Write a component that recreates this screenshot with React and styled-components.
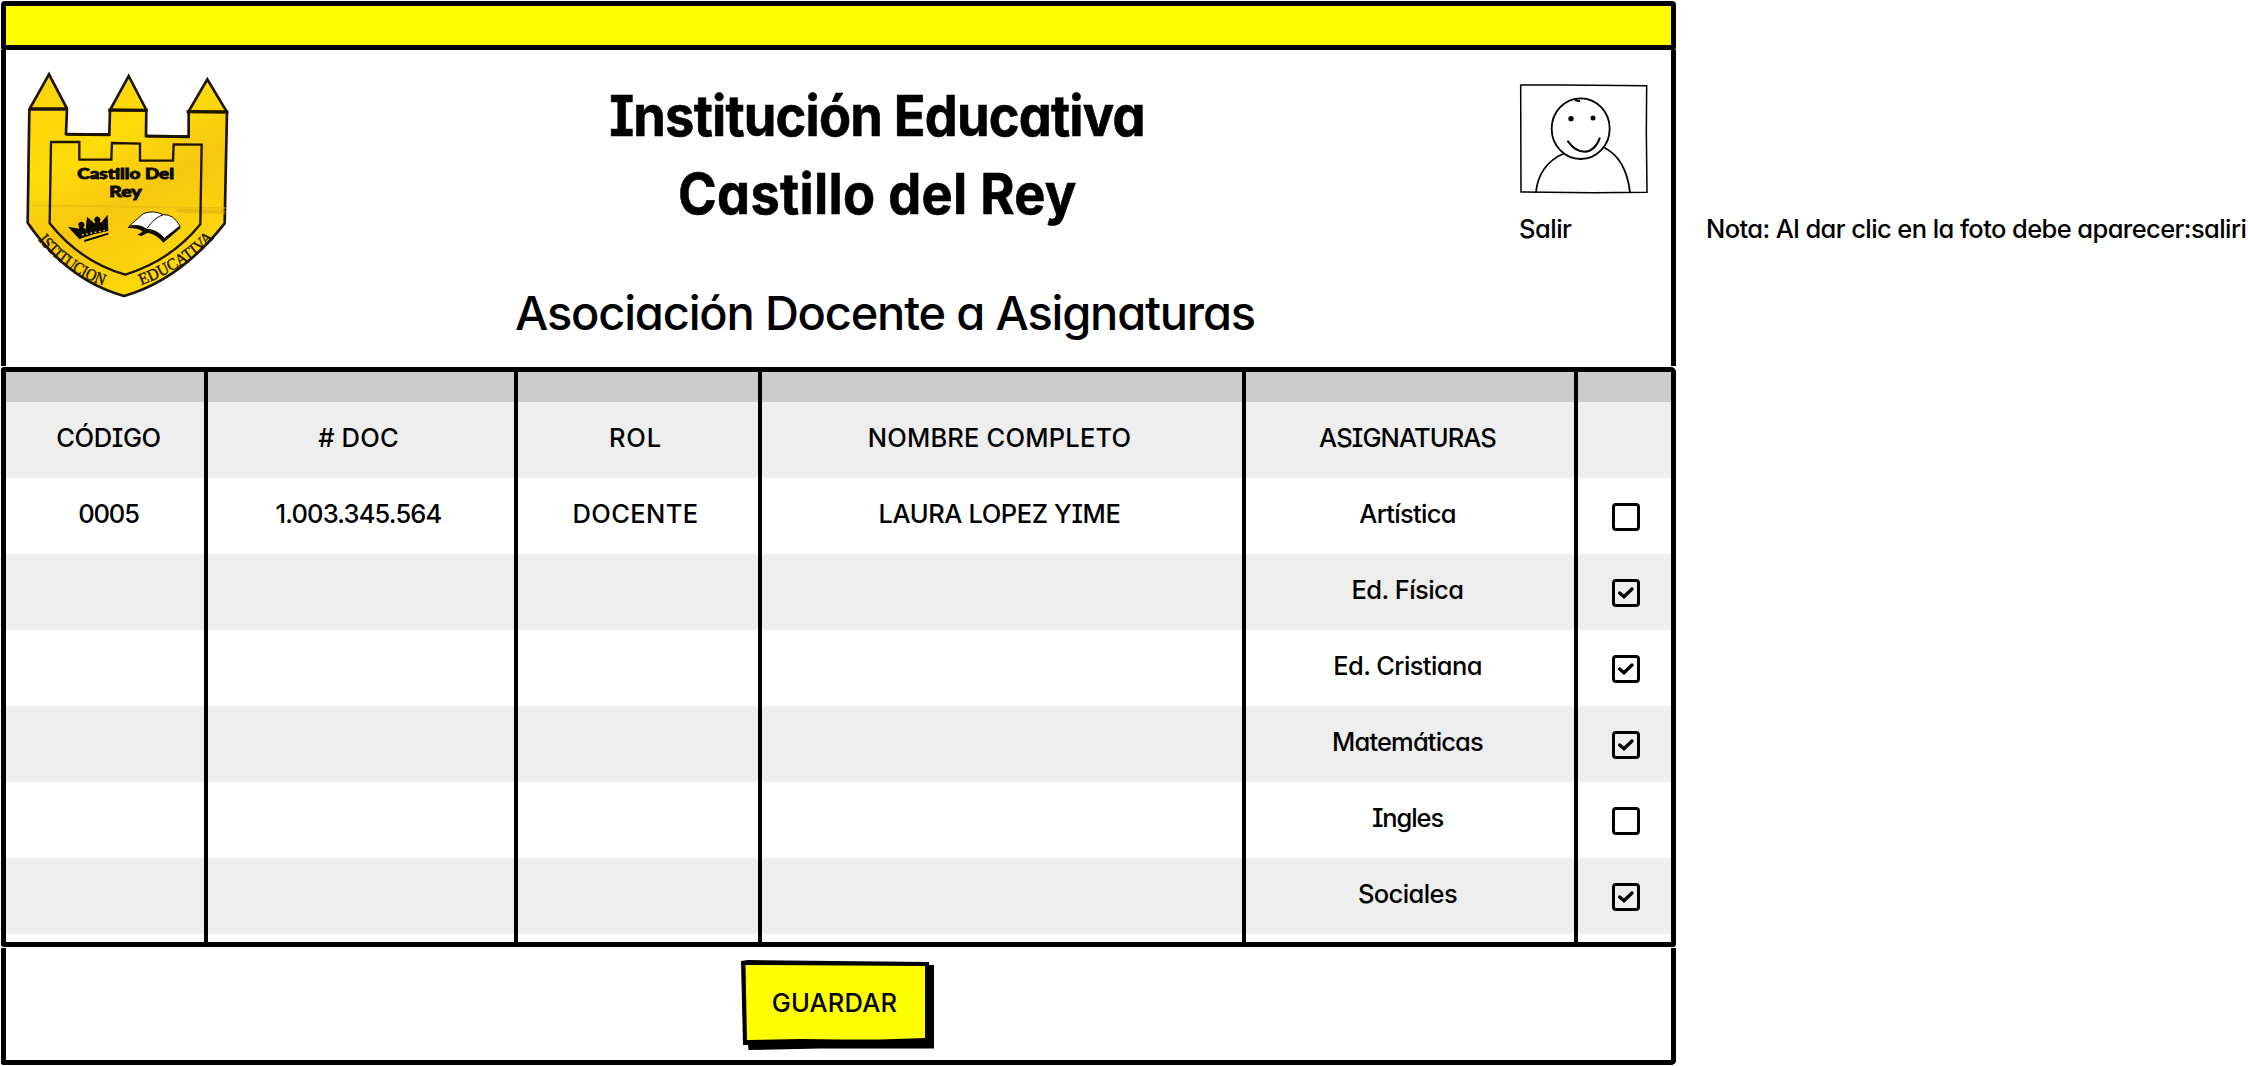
import React, { useState } from 'react';
import styled, { createGlobalStyle } from 'styled-components';

const GlobalStyle = createGlobalStyle`
  * { box-sizing: border-box; }
  body {
    margin: 0;
    background: #fff;
    color: #000;
    font-family: Inter, "Noto Sans", sans-serif;
    font-feature-settings: "cv11", "cv08";
    overflow: hidden;
  }
`;

const Page = styled.main`
  display: flex;
  align-items: flex-start;
  width: 2248px;
  height: 1066px;
  overflow: hidden;
`;

const Screen = styled.section`
  display: flex;
  flex-direction: column;
  flex: none;
  width: 1676px;
  padding: 1px 0 0 1px;
`;

const TopBar = styled.div`
  height: 49px;
  border: 5px solid #000;
  border-radius: 4px 4px 2px 2px;
  background: #ffff00;
`;

const Header = styled.header`
  display: grid;
  grid-template-columns: 234px 1fr 152px;
  height: 316px;
  margin-bottom: 1px;
  border: solid #000;
  border-width: 0 5px;
`;

const LogoSlot = styled.div`
  padding: 20px 0 0 14px;
`;

const Titles = styled.div`
  display: flex;
  flex-direction: column;
  align-items: center;
  padding: 27px 5px 0 0;
`;

const Title = styled.h1`
  margin: 0;
  font-size: 56.4px;
  font-weight: 700;
  line-height: 78px;
  letter-spacing: ${(p) => p.$track}px;
  white-space: nowrap;
  transform: scaleX(0.93);
  -webkit-text-stroke: 0.6px #000;
`;

const Subtitle = styled.h2`
  margin: 50px 0 0 16px;
  font-size: 47px;
  font-weight: 500;
  line-height: 60px;
  letter-spacing: -1.2px;
  white-space: nowrap;
`;

const Label = styled.span`
  font-size: 25.5px;
  font-weight: 500;
  line-height: 30px;
  letter-spacing: ${(p) => p.$track || 0}px;
  white-space: nowrap;
`;

const User = styled.div`
  display: flex;
  flex-direction: column;
  align-items: flex-start;
  gap: 19px;
  padding-top: 33px;
`;

const Table = styled.div`
  display: flex;
  flex-direction: column;
  height: 580px;
  margin-bottom: 1px;
  border: 5px solid #000;
  border-radius: 3px 5px 3px 3px;
`;

const Row = styled.div`
  display: grid;
  grid-template-columns: 202px 310px 244px 484px 332px 93px;
  height: ${(p) => p.$height || 76}px;
  background: ${(p) => p.$fill || '#fff'};
`;

const Cell = styled.div`
  display: flex;
  align-items: center;
  justify-content: center;
  padding: 0 ${(p) => (p.$first ? 0 : 5)}px 5px ${(p) => (p.$first ? 7 : 0)}px;
  border-right: 4px solid #000;
`;

const CheckCell = styled.div`
  display: flex;
  align-items: center;
  justify-content: center;
  padding: 2px 0 0 3px;
`;

const CheckButton = styled.button`
  display: block;
  width: 28px;
  height: 28px;
  padding: 0;
  border: 3px solid #000;
  border-radius: 4px;
  background: transparent;
`;

const Footer = styled.footer`
  display: flex;
  align-items: flex-start;
  height: 117px;
  padding: 12px 0 0 735px;
  border: solid #000;
  border-width: 0 5px 5px;
  border-radius: 0 0 5px 3px;
`;

const SaveButton = styled.button`
  position: relative;
  z-index: 0;
  width: 193px;
  height: 90px;
  padding: 0 6px 5px 0;
  border: 0;
  background: none;
  color: #000;
  font-family: inherit;
  font-feature-settings: inherit;

  &::before,
  &::after {
    content: '';
    position: absolute;
    inset: 0;
    z-index: -1;
  }
  &::before {
    background: #000;
    clip-path: polygon(0 1px, 7px 0, 188px 2px, 188px 5px, 193px 5px, 193px 88.5px, 80px 88.5px, 7.5px 90px, 7px 85px, 2px 85px);
  }
  &::after {
    background: #ffff00;
    clip-path: polygon(4.5px 5px, 184px 6px, 184px 78px, 140px 79.5px, 100px 79.5px, 60px 79px, 6px 80px);
  }
`;

const Note = styled.aside`
  padding: 214px 0 0 30px;
`;

function Logo() {
  return (
    <svg width="213.33" height="230" viewBox="60 60 640 690" role="img">
      <defs>
        <path id="ribbonLeft" d="M114 570 Q195 668 314 708" />
        <path id="ribbonRight" d="M424 706 Q562 652 648 558" />
        <linearGradient id="gold" x1="0" y1="0" x2="0.5" y2="1">
          <stop offset="0" stopColor="#fdd20c" />
          <stop offset="0.4" stopColor="#ffdc0a" />
          <stop offset="0.65" stopColor="#f6c710" />
          <stop offset="1" stopColor="#ffd80a" />
        </linearGradient>
      </defs>
      <path
        d="M88 178 L147 73 L201 176 L198 252 L328 254 L330 180 L386 78 L439 180 L438 258 L566 260 L566 184 L622 88 L681 186 L674 520 Q540 690 372 738 Q200 690 83 518 Z"
        fill="url(#gold)"
        stroke="#1c1404"
        strokeWidth="8"
      />
      <path d="M88 177 L204 177 M325 180 L443 181 M560 185 L685 186" stroke="#1c1404" strokeWidth="10" />
      <path d="M198 253 L328 254 M438 258 L568 260" stroke="#1c1404" strokeWidth="9" />
      <path d="M95 466 L675 474" stroke="#e9c010" strokeWidth="5" />
      <path d="M530 482 L675 486" stroke="#d9a512" strokeWidth="12" opacity="0.5" />
      <path
        d="M153 276 L238 276 L238 329 L334 329 L336 279 L420 281 L420 332 L519 332 L521 283 L605 284 L601 523 Q515 630 376 674 Q240 635 149 520 Z"
        fill="none"
        stroke="#1c1404"
        strokeWidth="7"
      />
      <g fontFamily="Lato, sans-serif" fontWeight="900" fontSize="43" fill="#0c0900" stroke="#0c0900" strokeWidth="2.5">
        <text x="232" y="388" textLength="290" lengthAdjust="spacingAndGlyphs">Castillo Del</text>
        <text x="328" y="441" textLength="97" lengthAdjust="spacingAndGlyphs">Rey</text>
      </g>
      <path d="M204 530 L238 536 L236 528 A9 9 0 1 1 249 532 L257 538 L261 500 L283 520 L286 516 A9 9 0 1 1 299 515 L303 518 L323 494 L325 543 Q282 550 238 568 Z" fill="#0c0900" />
      <path d="M253 573 L325 551" stroke="#0c0900" strokeWidth="6" />
      <path d="M246 555 L320 540" stroke="#f8d43a" strokeWidth="4" strokeDasharray="5 8" />
      <path d="M384 530 L424 525 Q442 535 452 541 Q480 545 491 565 L541 526 L541 535 L490 578 Q472 554 444 548 L424 558 L412 554 L428 545 Q415 533 384 534 Z" fill="#0c0900" />
      <path d="M388 528 L430 491 Q460 479 490 494 Q520 492 540 528 L493 565 Q470 538 440 538 Q420 522 388 528 Z" fill="#fff" stroke="#0c0900" strokeWidth="3" />
      <path d="M490 494 Q462 503 441 536" fill="none" stroke="#0c0900" strokeWidth="3" />
      <g fontFamily="Liberation Serif, serif" fontSize="50" fill="#1c1404" stroke="#1c1404" strokeWidth="1.2">
        <text textLength="242" lengthAdjust="spacingAndGlyphs">
          <textPath href="#ribbonLeft" textLength="242" lengthAdjust="spacingAndGlyphs">ISTITUCION</textPath>
        </text>
        <text textLength="262" lengthAdjust="spacingAndGlyphs">
          <textPath href="#ribbonRight" textLength="262" lengthAdjust="spacingAndGlyphs">EDUCATIVA</textPath>
        </text>
      </g>
    </svg>
  );
}

function Avatar() {
  return (
    <svg width="130" height="112" viewBox="27 24 390 336" fill="none" stroke="#000" strokeLinecap="round">
      <path d="M32 30 L160 30 L410 32 L409 170 L411 352 L250 353 L33 351 Z" strokeWidth="4.5" />
      <ellipse cx="212" cy="161" rx="87" ry="91" strokeWidth="5.5" />
      <path d="M197 76 L208 78" strokeWidth="6" />
      <path d="M174 199 C190 222 208 230 224 230 C246 229 260 214 269 190" strokeWidth="6" />
      <path d="M78 352 C82 300 112 256 160 236" strokeWidth="5" />
      <path d="M285 219 C334 245 354 300 360 352" strokeWidth="5.5" />
      <g fill="#000" stroke="none">
        <circle cx="183" cy="131" r="8" />
        <circle cx="249" cy="129" r="7.5" />
      </g>
    </svg>
  );
}

function CheckBox({ initial }) {
  const [on, setOn] = useState(initial);
  return (
    <CheckButton role="checkbox" aria-checked={on} onClick={() => setOn(!on)}>
      {on && (
        <svg width="22" height="22" viewBox="9 9 66 66" fill="none" stroke="#000" strokeWidth="10" strokeLinecap="round" display="block">
          <path d="M23 42 L36 53 L60 30" />
        </svg>
      )}
    </CheckButton>
  );
}

const headings = [
  ['CÓDIGO', -0.4],
  ['# DOC', 0.2],
  ['ROL', 0.8],
  ['NOMBRE COMPLETO', 0.2],
  ['ASIGNATURAS', -0.9],
];

const empty = [[''], [''], [''], ['']];

const records = [
  {
    cells: [['0005', -1.1], ['1.003.345.564', -0.85], ['DOCENTE', 0.4], ['LAURA LOPEZ YIME', -0.4], ['Artística', -0.7]],
    checked: false,
  },
  { cells: [...empty, ['Ed. Física', -0.55]], checked: true },
  { cells: [...empty, ['Ed. Cristiana', -0.6]], checked: true },
  { cells: [...empty, ['Matemáticas', -0.85]], checked: true },
  { cells: [...empty, ['Ingles', -1.1]], checked: false },
  { cells: [...empty, ['Sociales', -0.6]], checked: true },
];

function Cells({ items }) {
  return items.map(([text, track], i) => (
    <Cell key={i} $first={i === 0}>
      {text && <Label $track={track}>{text}</Label>}
    </Cell>
  ));
}

export default function App() {
  return (
    <Page>
      <GlobalStyle />
      <Screen>
        <TopBar />
        <Header>
          <LogoSlot>
            <Logo />
          </LogoSlot>
          <Titles>
            <Title $track={-0.9}>Institución Educativa</Title>
            <Title $track={0.3}>Castillo del Rey</Title>
            <Subtitle>Asociación Docente a Asignaturas</Subtitle>
          </Titles>
          <User>
            <Avatar />
            <Label $track={-0.5}>Salir</Label>
          </User>
        </Header>
        <Table>
          <Row $height={30} $fill="#cccccc">
            <Cells items={[...empty, ['']]} />
          </Row>
          <Row $fill="#eeeeee">
            <Cells items={headings} />
          </Row>
          {records.map((record, i) => (
            <Row key={i} $fill={i % 2 ? '#eeeeee' : '#ffffff'}>
              <Cells items={record.cells} />
              <CheckCell>
                <CheckBox initial={record.checked} />
              </CheckCell>
            </Row>
          ))}
          <Row $height={8}>
            <Cells items={[...empty, ['']]} />
          </Row>
        </Table>
        <Footer>
          <SaveButton>
            <Label $track={0.2}>GUARDAR</Label>
          </SaveButton>
        </Footer>
      </Screen>
      <Note>
        <Label $track={-0.59}>Nota: Al dar clic en la foto debe aparecer:saliri</Label>
      </Note>
    </Page>
  );
}
